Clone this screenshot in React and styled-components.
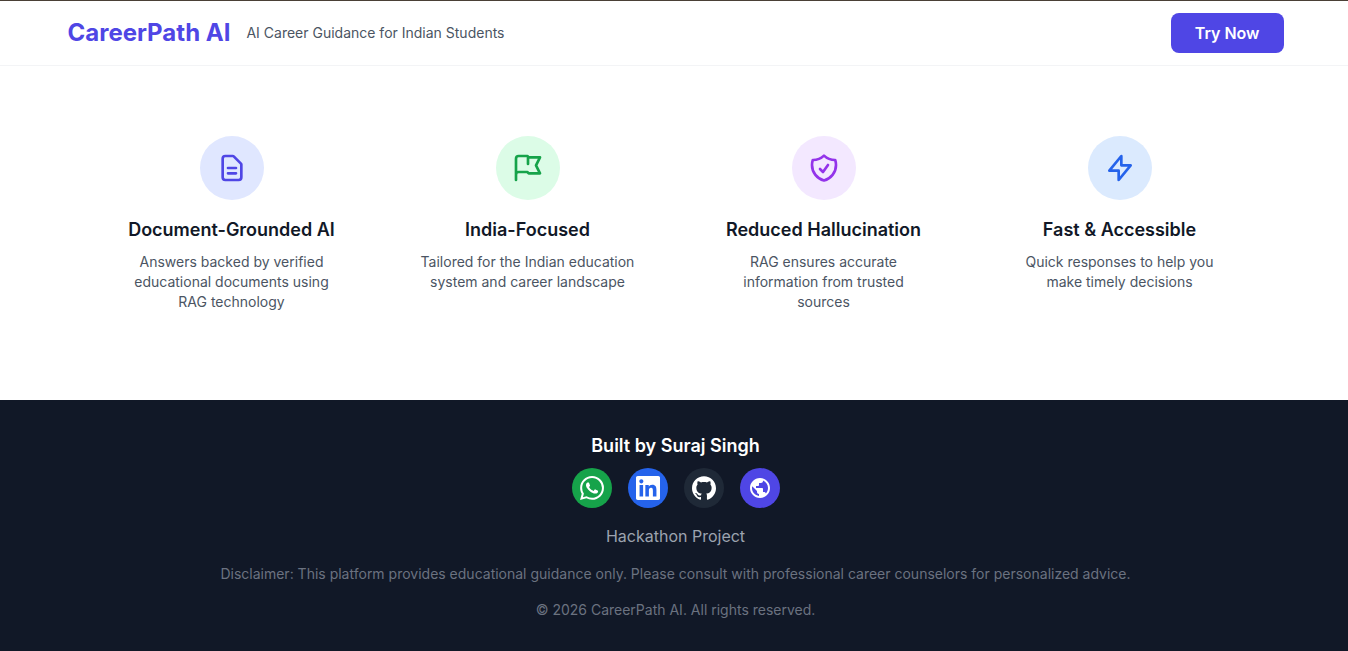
import React from 'react'
import styled, { createGlobalStyle } from 'styled-components'
import { SiWhatsapp, SiGithub, SiLinkedin } from 'react-icons/si'
import { MdPublic } from 'react-icons/md'

const Global = createGlobalStyle`
  html, body {
    margin: 0;
    padding: 0;
    height: 651px;
    overflow: hidden;
    background: #fff;
  }
  * { box-sizing: border-box; }
  #root { width: 1351px; }
`

const Page = styled.div`
  font-family: Inter, "Liberation Sans", sans-serif;
  background: #fff;
`

const Header = styled.header`
  border-top: 1px solid #4a4036;
  border-bottom: 1px solid #f3f4f6;
`

const HeaderInner = styled.div`
  max-width: 1280px;
  margin: 0 auto;
  padding: 12px 32px;
  display: flex;
  align-items: center;
  justify-content: space-between;
`

const Brand = styled.div`
  display: flex;
  align-items: center;
  gap: 16px;
`

const Logo = styled.div`
  font-size: 24px;
  line-height: 32px;
  font-weight: 700;
  color: #4f46e5;
`

const Tagline = styled.div`
  font-size: 14px;
  line-height: 20px;
  color: #4b5563;
`

const TryButton = styled.button`
  height: 40px;
  padding: 0 24px;
  border: 0;
  border-radius: 8px;
  background: #4f46e5;
  color: #fff;
  font-family: inherit;
  font-size: 16px;
  font-weight: 600;
`

const Features = styled.section`
  max-width: 1152px;
  margin: 0 auto;
  height: 334px;
  padding-top: 70px;
  display: grid;
  grid-template-columns: repeat(4, 1fr);
  gap: 32px;
  align-items: start;
`

const Feature = styled.div`
  display: flex;
  flex-direction: column;
  align-items: center;
  text-align: center;
`

const IconCircle = styled.div`
  width: 64px;
  height: 64px;
  border-radius: 50%;
  background: ${p => p.$bg};
  color: ${p => p.$fg};
  display: flex;
  align-items: center;
  justify-content: center;
  margin-bottom: 16px;
`

const FeatureTitle = styled.h3`
  margin: 0 0 8px;
  font-size: 18px;
  line-height: 28px;
  font-weight: 600;
  color: #111827;
`

const FeatureText = styled.p`
  margin: 0;
  font-size: 14px;
  line-height: 20px;
  color: #4b5563;
`

const Footer = styled.footer`
  background: #111827;
  height: 260px;
  padding-top: 32px;
  display: flex;
  flex-direction: column;
  align-items: center;
  text-align: center;
`

const Built = styled.div`
  font-size: 18px;
  line-height: 28px;
  font-weight: 600;
  color: #fff;
  margin-bottom: 8px;
`

const Socials = styled.div`
  display: flex;
  gap: 16px;
  margin-bottom: 16px;
`

const Social = styled.a`
  width: 40px;
  height: 40px;
  border-radius: 50%;
  background: ${p => p.$bg};
  color: #fff;
  display: flex;
  align-items: center;
  justify-content: center;
`

const Project = styled.div`
  font-size: 16px;
  line-height: 24px;
  color: #9ca3af;
  margin-bottom: 16px;
`

const Small = styled.div`
  font-size: 14px;
  line-height: 20px;
  color: #6b7280;
  margin-bottom: 16px;
`

const Outline = ({ d }) => (
  <svg width="32" height="32" viewBox="0 0 24 24" fill="none" stroke="currentColor" strokeWidth="2" strokeLinecap="round" strokeLinejoin="round">
    <path d={d} />
  </svg>
)

const features = [
  {
    title: 'Document-Grounded AI',
    text: ['Answers backed by verified', 'educational documents using', 'RAG technology'],
    bg: '#e0e7ff',
    fg: '#4f46e5',
    d: 'M9 12h6m-6 4h6m2 5H7a2 2 0 01-2-2V5a2 2 0 012-2h5.586a1 1 0 01.707.293l5.414 5.414a1 1 0 01.293.707V19a2 2 0 01-2 2z',
  },
  {
    title: 'India-Focused',
    text: ['Tailored for the Indian education', 'system and career landscape'],
    bg: '#dcfce7',
    fg: '#16a34a',
    d: 'M3 21v-4m0 0V5a2 2 0 012-2h6.5l1 1H21l-3 6 3 6h-8.5l-1-1H5a2 2 0 00-2 2zm9-13.5V9',
  },
  {
    title: 'Reduced Hallucination',
    text: ['RAG ensures accurate', 'information from trusted', 'sources'],
    bg: '#f3e8ff',
    fg: '#9333ea',
    d: 'M9 12.75 11.25 15 15 9.75m-3-7.036A11.959 11.959 0 0 1 3.598 6 11.99 11.99 0 0 0 3 9.749c0 5.592 3.824 10.29 9 11.623 5.176-1.332 9-6.03 9-11.622 0-1.31-.21-2.571-.598-3.751h-.152c-3.196 0-6.1-1.248-8.25-3.285Z',
  },
  {
    title: 'Fast & Accessible',
    text: ['Quick responses to help you', 'make timely decisions'],
    bg: '#dbeafe',
    fg: '#2563eb',
    d: 'M13 10V3L4 14h7v7l9-11h-7z',
  },
]

export default function App() {
  return (
    <Page>
      <Global />
      <Header>
        <HeaderInner>
          <Brand>
            <Logo>CareerPath AI</Logo>
            <Tagline>AI Career Guidance for Indian Students</Tagline>
          </Brand>
          <TryButton>Try Now</TryButton>
        </HeaderInner>
      </Header>
      <Features>
        {features.map(f => (
          <Feature key={f.title}>
            <IconCircle $bg={f.bg} $fg={f.fg}>
              <Outline d={f.d} />
            </IconCircle>
            <FeatureTitle>{f.title}</FeatureTitle>
            <FeatureText>
              {f.text.map(line => (
                <React.Fragment key={line}>{line}<br /></React.Fragment>
              ))}
            </FeatureText>
          </Feature>
        ))}
      </Features>
      <Footer>
        <Built>Built by Suraj Singh</Built>
        <Socials>
          <Social $bg="#16a34a"><SiWhatsapp size={24} /></Social>
          <Social $bg="#2563eb"><SiLinkedin size={24} /></Social>
          <Social $bg="#1f2937"><SiGithub size={24} /></Social>
          <Social $bg="#4f46e5"><MdPublic size={24} /></Social>
        </Socials>
        <Project>Hackathon Project</Project>
        <Small>Disclaimer: This platform provides educational guidance only. Please consult with professional career counselors for personalized advice.</Small>
        <Small>© 2026 CareerPath AI. All rights reserved.</Small>
      </Footer>
    </Page>
  )
}
